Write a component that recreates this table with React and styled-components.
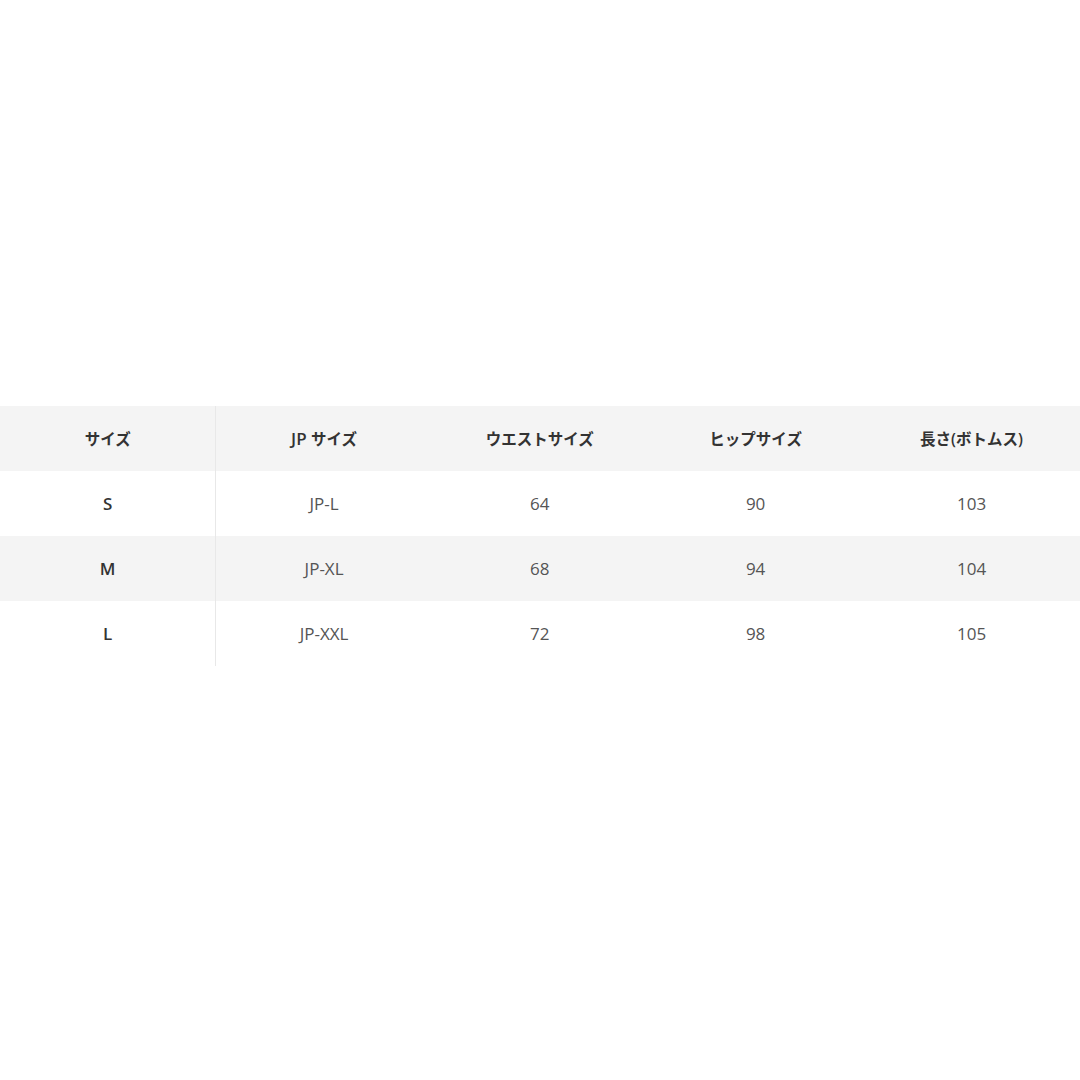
import React from "react";
import styled, { createGlobalStyle } from "styled-components";

const GlobalStyle = createGlobalStyle`
  html, body {
    margin: 0;
    padding: 0;
    background: #ffffff;
  }
  body {
    font-family: "Open Sans", "Noto Sans CJK JP", sans-serif;
  }
`;

const Page = styled.div`
  width: 1080px;
  height: 1080px;
  padding-top: 406px;
  box-sizing: border-box;
`;

const Table = styled.table`
  width: 1080px;
  border-collapse: collapse;
  table-layout: fixed;
`;

const Row = styled.tr`
  height: 65px;
  background: ${(p) => (p.$shaded ? "#f4f4f4" : "#ffffff")};
`;

const Cell = styled.td`
  text-align: center;
  vertical-align: middle;
  padding: 0;
  font-size: 17px;
  font-weight: ${(p) => (p.$bold ? 600 : 400)};
  color: ${(p) => (p.$bold ? "#333333" : "#555555")};
  border-right: ${(p) => (p.$divider ? "1px solid #e8e8e8" : "none")};
`;

// the Japanese glyphs sit smaller than the latin ones in the reference
const Kana = styled.span`
  font-size: 15.5px;
`;

const headers = [
  [<Kana key="a">サイズ</Kana>],
  ["JP ", <Kana key="a">サイズ</Kana>],
  [<Kana key="a">ウエストサイズ</Kana>],
  [<Kana key="a">ヒップサイズ</Kana>],
  [<Kana key="a">長さ(ボトムス)</Kana>],
];

const rows = [
  ["S", "JP-L", "64", "90", "103"],
  ["M", "JP-XL", "68", "94", "104"],
  ["L", "JP-XXL", "72", "98", "105"],
];

const App = () => {
  return (
    <Page>
      <GlobalStyle />
      <Table>
        <tbody>
          <Row $shaded>
            {headers.map((h, i) => (
              <Cell key={i} $bold $divider={i === 0}>
                {h}
              </Cell>
            ))}
          </Row>
          {rows.map((r, ri) => (
            <Row key={r[0]} $shaded={ri % 2 === 1}>
              {r.map((v, i) => (
                <Cell key={i} $bold={i === 0} $divider={i === 0}>
                  {v}
                </Cell>
              ))}
            </Row>
          ))}
        </tbody>
      </Table>
    </Page>
  );
};

export default App;
